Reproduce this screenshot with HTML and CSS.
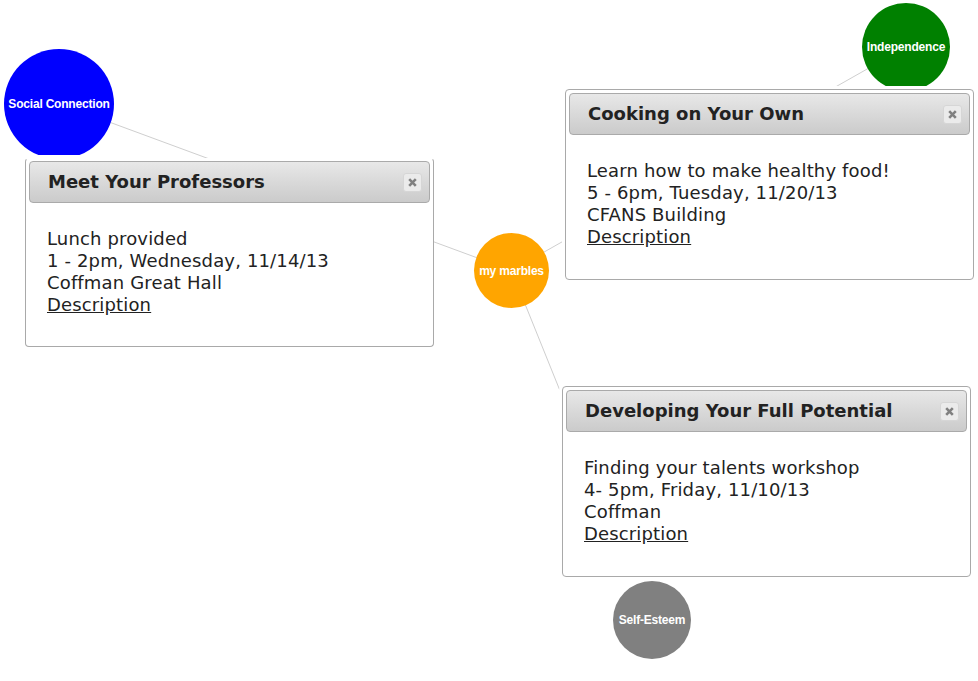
FILE: index.html
```html
<!DOCTYPE html>
<html lang="en">
<head>
<meta charset="utf-8">
<title>my marbles</title>
<link rel="stylesheet" href="styles.css">
</head>
<body>
<div class="canvas">
  <svg class="links" width="978" height="681" viewBox="0 0 978 681" aria-hidden="true">
    <line x1="511.5" y1="270.5" x2="59" y2="103.5"></line>
    <line x1="511.5" y1="270.5" x2="906" y2="47"></line>
    <line x1="511.5" y1="270.5" x2="571" y2="418"></line>
  </svg>

  <div class="node node-social">Social Connection</div>
  <div class="node node-independence">Independence</div>
  <div class="node node-marbles">my marbles</div>
  <div class="node node-esteem">Self-Esteem</div>

  <section class="dialog dialog-professors">
    <header class="dialog-titlebar">
      <h2 class="dialog-title">Meet Your Professors</h2>
      <button class="dialog-close" type="button" aria-label="close">
        <svg width="9" height="9" viewBox="0 0 9 9"><path d="M1.2 1.2 L7.8 7.8 M7.8 1.2 L1.2 7.8"></path></svg>
      </button>
    </header>
    <div class="dialog-body">
      <p class="dialog-line">Lunch provided</p>
      <p class="dialog-line">1 - 2pm, Wednesday, 11/14/13</p>
      <p class="dialog-line">Coffman Great Hall</p>
      <a class="dialog-link" href="#">Description</a>
    </div>
  </section>

  <section class="dialog dialog-cooking">
    <header class="dialog-titlebar">
      <h2 class="dialog-title">Cooking on Your Own</h2>
      <button class="dialog-close" type="button" aria-label="close">
        <svg width="9" height="9" viewBox="0 0 9 9"><path d="M1.2 1.2 L7.8 7.8 M7.8 1.2 L1.2 7.8"></path></svg>
      </button>
    </header>
    <div class="dialog-body">
      <p class="dialog-line">Learn how to make healthy food!</p>
      <p class="dialog-line">5 - 6pm, Tuesday, 11/20/13</p>
      <p class="dialog-line">CFANS Building</p>
      <a class="dialog-link" href="#">Description</a>
    </div>
  </section>

  <section class="dialog dialog-potential">
    <header class="dialog-titlebar">
      <h2 class="dialog-title">Developing Your Full Potential</h2>
      <button class="dialog-close" type="button" aria-label="close">
        <svg width="9" height="9" viewBox="0 0 9 9"><path d="M1.2 1.2 L7.8 7.8 M7.8 1.2 L1.2 7.8"></path></svg>
      </button>
    </header>
    <div class="dialog-body">
      <p class="dialog-line">Finding your talents workshop</p>
      <p class="dialog-line">4- 5pm, Friday, 11/10/13</p>
      <p class="dialog-line">Coffman</p>
      <a class="dialog-link" href="#">Description</a>
    </div>
  </section>
</div>
</body>
</html>
```

FILE: styles.css
```css
* { box-sizing: border-box; }

html, body {
  margin: 0;
  padding: 0;
  background: #ffffff;
}

.canvas {
  position: relative;
  width: 978px;
  height: 681px;
  overflow: hidden;
  font-family: "DejaVu Sans", Verdana, sans-serif;
}

.links {
  position: absolute;
  left: 0;
  top: 0;
  z-index: 0;
}

.links line {
  stroke: #cfcfcf;
  stroke-width: 1;
}

/* circular nodes */
.node {
  position: absolute;
  z-index: 1;
  display: flex;
  align-items: center;
  justify-content: center;
  border-radius: 50%;
  color: #ffffff;
  font-family: "Liberation Sans", Arial, sans-serif;
  font-weight: bold;
  font-size: 12px;
  letter-spacing: -0.2px;
  white-space: nowrap;
}

.node-social {
  left: 4px;
  top: 49px;
  width: 110px;
  height: 110px;
  background: #0000ff;
  clip-path: inset(0 0 4px 0);
}

.node-independence {
  left: 862px;
  top: 3px;
  width: 88px;
  height: 88px;
  background: #008000;
}

.node-marbles {
  left: 474px;
  top: 233px;
  width: 75px;
  height: 75px;
  background: #ffa500;
}

.node-esteem {
  left: 613px;
  top: 581px;
  width: 78px;
  height: 78px;
  background: #808080;
}

/* dialogs */
.dialog {
  position: absolute;
  z-index: 2;
  width: 409px;
  height: 191px;
  padding: 3px;
  display: flex;
  flex-direction: column;
  background: #ffffff;
  border: 1px solid #a9a9a9;
  border-radius: 4px;
  box-shadow: 0 0 0 3px #ffffff;
  color: #222222;
}

.dialog-professors {
  left: 25px;
  top: 158px;
  height: 189px;
  padding-top: 2px;
  border-top-color: transparent;
  box-shadow: none;
}

.dialog-cooking {
  left: 565px;
  top: 89px;
}

.dialog-potential {
  left: 562px;
  top: 386px;
}

.dialog-titlebar {
  height: 42px;
  flex: none;
  display: flex;
  align-items: center;
  justify-content: space-between;
  padding: 0 7px 0 18px;
  border: 1px solid #aaaaaa;
  border-radius: 4px;
  background: linear-gradient(to bottom, #e8e8e8 0%, #d9d9d9 50%, #cbcbcb 100%);
}

.dialog-title {
  margin: 0;
  font-size: 18px;
  font-weight: bold;
  color: #222222;
  line-height: 22px;
  white-space: nowrap;
}

.dialog-close {
  width: 19px;
  height: 19px;
  padding: 0;
  margin: 0;
  display: flex;
  align-items: center;
  justify-content: center;
  border: 1px solid #d6d6d6;
  border-radius: 3px;
  background: #ebebeb;
}

.dialog-close path {
  stroke: #808080;
  stroke-width: 2.6;
  fill: none;
}

.dialog-body {
  padding: 25px 0 0 18px;
  display: flex;
  flex-direction: column;
  font-size: 18px;
  line-height: 22px;
  letter-spacing: 0.15px;
}

.dialog-line {
  margin: 0;
  white-space: nowrap;
}

.dialog-link {
  color: #222222;
  text-decoration: underline;
  align-self: flex-start;
}
```
